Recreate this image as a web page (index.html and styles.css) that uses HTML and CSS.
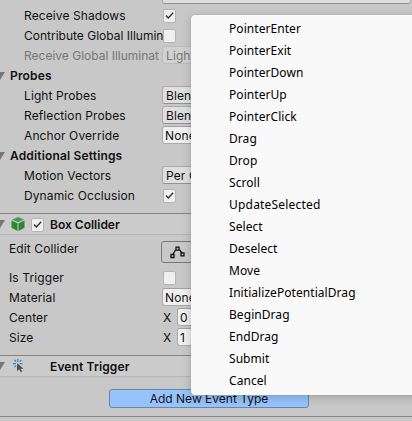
FILE: index.html
```html
<!DOCTYPE html>
<html lang="en">
<head>
<meta charset="utf-8">
<title>Inspector</title>
<link rel="stylesheet" href="styles.css">
</head>
<body>
<main class="inspector">
  <section class="renderer">
    <div class="row sub"><label>Cast Shadows</label><span class="field dropdown"></span></div>
    <div class="row sub"><label>Receive Shadows</label><span class="check"><svg viewBox="0 0 13 13"><path d="M3 6.5 5.3 9 10.2 3.8"/></svg></span></div>
    <div class="row sub"><label class="snug">Contribute Global Illumin</label><span class="check"></span></div>
    <div class="row sub disabled"><label class="snug">Receive Global Illuminat</label><span class="field dropdown">Light</span></div>
    <div class="row group"><i class="fold"></i><b>Probes</b></div>
    <div class="row sub"><label>Light Probes</label><span class="field dropdown">Blend</span></div>
    <div class="row sub"><label>Reflection Probes</label><span class="field dropdown">Blend</span></div>
    <div class="row sub"><label>Anchor Override</label><span class="field input">None</span></div>
    <div class="row group"><i class="fold"></i><b>Additional Settings</b></div>
    <div class="row sub"><label>Motion Vectors</label><span class="field dropdown">Per O</span></div>
    <div class="row sub"><label>Dynamic Occlusion</label><span class="check"><svg viewBox="0 0 13 13"><path d="M3 6.5 5.3 9 10.2 3.8"/></svg></span></div>
  </section>
  <section class="component">
    <header class="head">
      <i class="fold"></i>
      <svg class="cube" viewBox="0 0 14 14"><path class="top" d="M7 0 13 2.5 7 5.3 1 2.5z"/><path d="M.5 3.5 6.5 6.3V14L.5 10.8z"/><path d="M13.5 3.5 7.5 6.3V14l6-3.2z"/></svg>
      <span class="check"><svg viewBox="0 0 13 13"><path d="M3 6.5 5.3 9 10.2 3.8"/></svg></span>
      <b>Box Collider</b>
    </header>
    <div class="row tall"><label>Edit Collider</label><span class="edit"><svg viewBox="0 0 15 13"><path d="M3 8.5 5.6 3.7M9.4 3.7 12 7"/><path d="M1 8.5h3v3H1zM6 1.2h3v3H6zM11 6.8h3v3h-3z"/></svg></span></div>
    <div class="row"><label>Is Trigger</label><span class="check"></span></div>
    <div class="row"><label>Material</label><span class="field input">None</span></div>
    <div class="row"><label>Center</label><span class="axis">X</span><span class="field input">0</span></div>
    <div class="row"><label>Size</label><span class="axis">X</span><span class="field input">1</span></div>
  </section>
  <section class="component event">
    <header class="head">
      <i class="fold"></i>
      <svg class="cursor" viewBox="0 0 14 14"><path class="rays" d="M4.8 0v3M1.5 1 3 2.6M8.2 1 6.7 2.6M0 4.7h3M6.8 4.7h2.6M1.5 8.2 3 6.7"/><path class="arrow" d="M4 4v8.2L6.2 10.3 7.7 13.3 9.2 12.4 7.8 9.7H10.5z"/></svg>
      <b>Event Trigger</b>
    </header>
    <button class="add">Add New Event Type</button>
  </section>
</main>
<ul class="menu">
  <li>PointerEnter</li><li>PointerExit</li><li>PointerDown</li><li>PointerUp</li><li>PointerClick</li><li>Drag</li><li>Drop</li><li>Scroll</li><li class="wide">UpdateSelected</li><li>Select</li><li>Deselect</li><li>Move</li><li>InitializePotentialDrag</li><li>BeginDrag</li><li>EndDrag</li><li>Submit</li><li>Cancel</li>
</ul>
</body>
</html>
```
FILE: styles.css
```css
* { box-sizing: border-box; }
body {
  margin: 0;
  height: 421px;
  overflow: hidden;
  position: relative;
  background: #c8c8c8;
  color: #111;
  font: 12px/20px Inter, "Liberation Sans", sans-serif;
  letter-spacing: .1px;
}
.inspector { height: 421px; overflow: hidden; }
.renderer { margin-top: -14px; height: 227px; }
.row { display: flex; height: 20px; padding-left: 9px; white-space: nowrap; }
.row label { width: 153px; flex: none; }
.row.sub { padding-left: 24px; }
.row.sub label { width: 138px; }
.row .snug { letter-spacing: 0; }
.row.group { padding-left: 0; }
.group b { margin-left: 5px; }
b { font-weight: 600; letter-spacing: .16px; }
.fold {
  width: 5px;
  height: 8px;
  flex: none;
  margin-top: 6px;
  background: #777;
  clip-path: polygon(0 0, 100% 0, 0 100%);
}
.check {
  width: 13px;
  height: 14px;
  flex: none;
  margin: 3px 0 0 1px;
  border: 1px solid #b4b4b4;
  border-radius: 2px;
  background: #f0f0f0;
}
.check svg { display: block; width: 13px; height: 13px; margin: -1px; }
.check path { fill: none; stroke: #333; stroke-width: 1.4; }
.field {
  flex: 1;
  height: 18px;
  margin-right: 1px;
  border: 1px solid #aaa;
  border-radius: 3px;
  line-height: 17px;
  padding-left: 3px;
}
.dropdown { background: #dfdfdf; border-bottom-color: #929292; }
.input { background: #f0f0f0; border-top-color: #a0a0a0; padding-left: 2px; line-height: 18px; }
.disabled { color: #777; }
.disabled .field { background: #d1d1d1; border-color: #bbb; }
.axis { width: 15px; flex: none; padding-left: 1px; }
.component { height: 142px; border-top: 1px solid #858585; }
.head { height: 21px; display: flex; border-bottom: 1px solid #b6b6b6; background: #cbcbcb; line-height: 21px; }
.head .check { margin: 4px 0 0 6px; }
.head b { margin-left: 6px; letter-spacing: 0; }
.cube { width: 14px; height: 14px; margin: 3px 0 0 6px; fill: #2f8435; }
.cube .top { fill: #449c49; }
.cursor { width: 14px; height: 14px; margin: 3px 0 0 8px; }
.cursor .rays { fill: none; stroke: #2684cd; stroke-width: 1.2; }
.cursor .arrow { fill: #505050; }
.event { height: 62px; border-bottom: 1px solid #858585; }
.event .head b { margin-left: 23px; letter-spacing: .13px; }
.tall { height: 33px; padding-top: 6px; }
.tall label { line-height: 16px; }
.edit { width: 34px; height: 22px; margin-left: -1px; border: 1px solid #777; border-radius: 3px; padding: 4px 0 0 8px; }
.edit svg { display: block; width: 15px; height: 13px; fill: none; stroke: #111; stroke-width: 1.3; }
.add {
  display: block;
  width: 200px;
  height: 19px;
  margin: 12px 0 0 109px;
  padding: 0;
  border: 1px solid #6d85a5;
  border-radius: 3px;
  background: #96c3fb;
  color: #111;
  font: inherit;
  line-height: 18px;
  letter-spacing: 0;
}
.menu {
  position: absolute;
  left: 191px;
  top: 15px;
  width: 240px;
  height: 380px;
  margin: 0;
  padding: 3px 0 0 38px;
  list-style: none;
  border-radius: 4px;
  background: #f9f9f9;
  box-shadow: 0 2px 10px rgba(0, 0, 0, .2), 0 0 1px rgba(0, 0, 0, .3);
  color: #000;
  font: 12px/22px "Noto Sans", sans-serif;
  letter-spacing: .06px;
}
.menu li { height: 22px; }
.menu .wide { letter-spacing: .2px; }
```
